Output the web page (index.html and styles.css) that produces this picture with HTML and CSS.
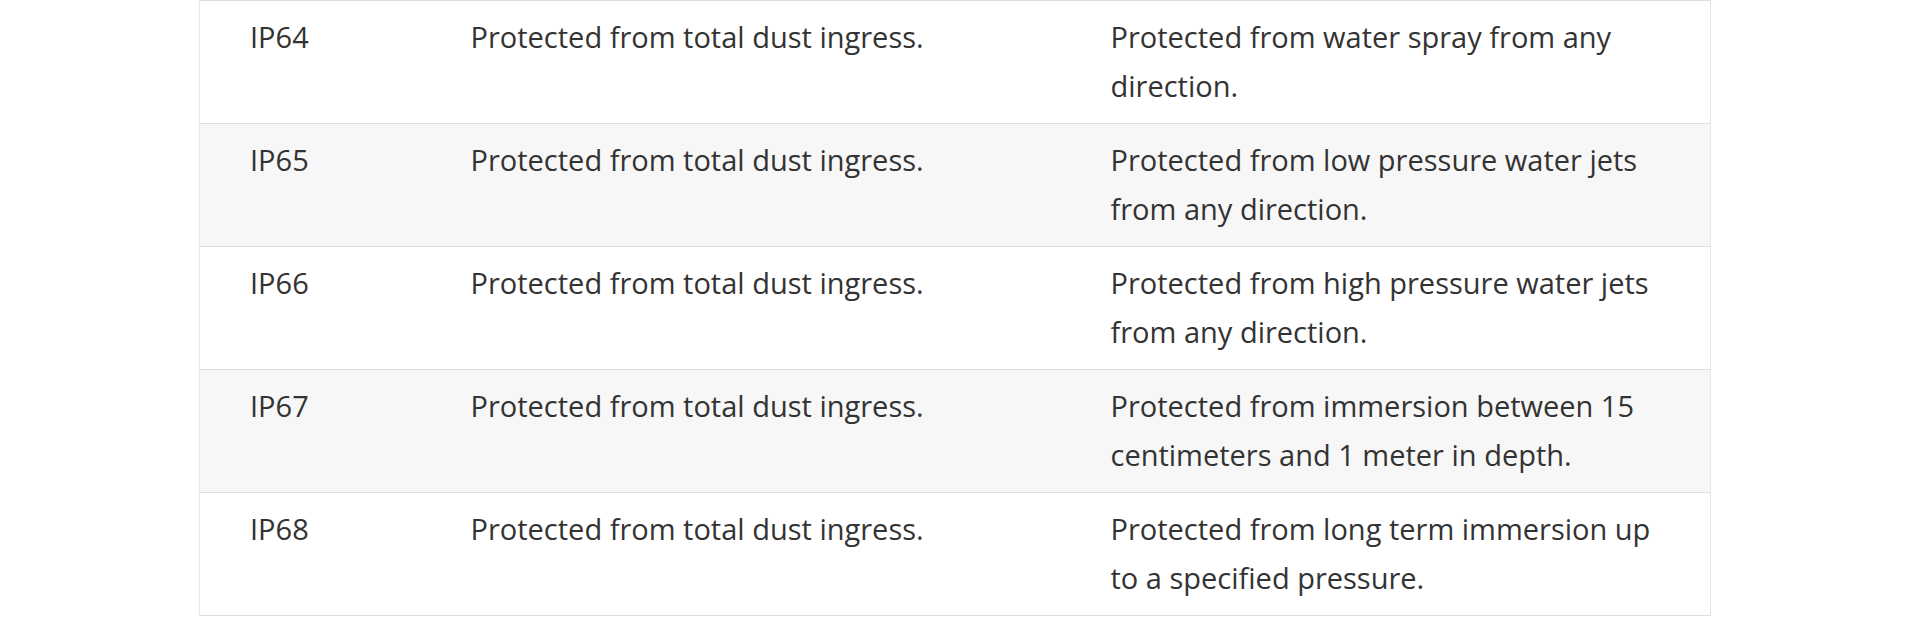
FILE: index.html
```html
<!DOCTYPE html>
<html lang="en">
<head>
<meta charset="utf-8">
<title>IP ratings</title>
<link rel="stylesheet" href="styles.css">
</head>
<body>
<div class="page">
  <table class="ip-table">
    <colgroup>
      <col class="col-code">
      <col class="col-solid">
      <col class="col-liquid">
    </colgroup>
    <tbody>
      <tr>
        <td>IP64</td>
        <td>Protected from total dust ingress.</td>
        <td>Protected from water spray from any direction.</td>
      </tr>
      <tr>
        <td>IP65</td>
        <td>Protected from total dust ingress.</td>
        <td>Protected from low pressure water jets from any direction.</td>
      </tr>
      <tr>
        <td>IP66</td>
        <td>Protected from total dust ingress.</td>
        <td>Protected from high pressure water jets from any direction.</td>
      </tr>
      <tr>
        <td>IP67</td>
        <td>Protected from total dust ingress.</td>
        <td>Protected from immersion between 15 centimeters and 1 meter in depth.</td>
      </tr>
      <tr>
        <td>IP68</td>
        <td>Protected from total dust ingress.</td>
        <td>Protected from long term immersion up to a specified pressure.</td>
      </tr>
    </tbody>
  </table>
</div>
</body>
</html>
```

FILE: styles.css
```css
html, body {
  margin: 0;
  padding: 0;
  background: #ffffff;
}

.page {
  padding-left: 199px;
}

.ip-table {
  width: 1512px;
  table-layout: fixed;
  border-collapse: collapse;
  border-left: 1px solid #e8e8e8;
  border-right: 1px solid #e8e8e8;
  border-bottom: 1px solid #dedede;
  font-family: "Open Sans", "Liberation Sans", sans-serif;
  font-size: 29px;
  line-height: 49px;
  color: #333333;
}

.col-code { width: 221px; }
.col-solid { width: 640px; }
.col-liquid { width: 650px; }

.ip-table tr {
  border-top: 1px solid #dedede;
}

.ip-table tr:nth-child(even) {
  background: #f7f7f7;
}

.ip-table td {
  padding: 11px 52px 13px 50px;
  vertical-align: top;
  text-align: left;
}
```
